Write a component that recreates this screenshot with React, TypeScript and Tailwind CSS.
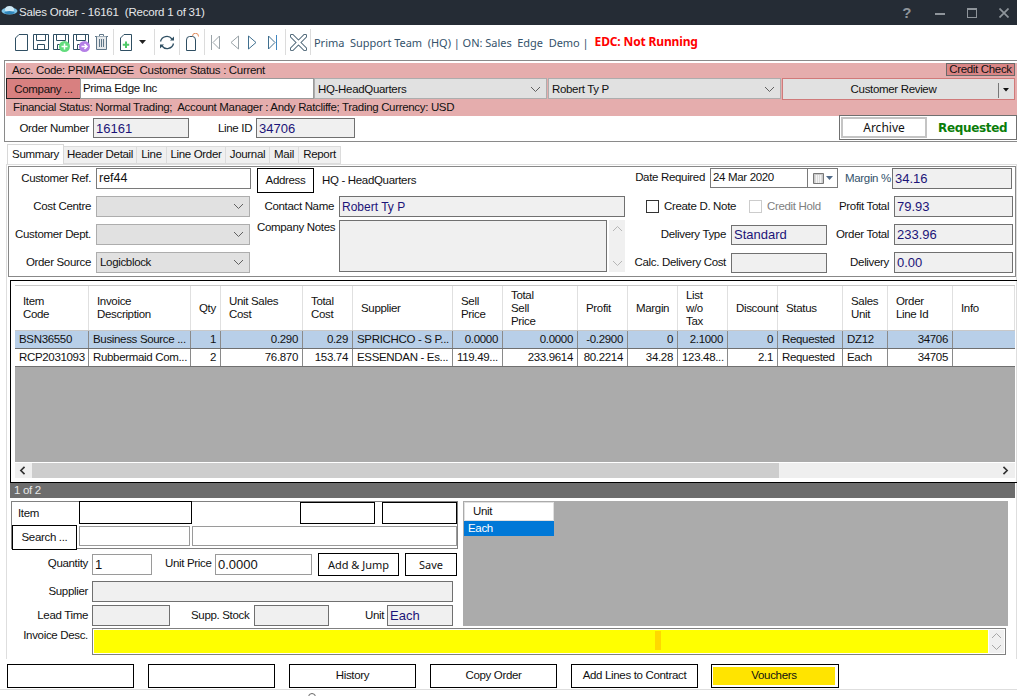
import React from "react";

const Chevron = ({ className = "", strong = false }: { className?: string; strong?: boolean }) => (
  <svg width="11" height="7" viewBox="0 0 11 7" className={className}>
    <path d="M1 1l4.500 4.500L10 1" fill="none" stroke={strong ? "#333" : "#606060"} strokeWidth={strong ? 2 : 1} />
  </svg>
);

const Ink = "#2f4f63";

const DocIcon = () => (
  <svg width="13" height="17" viewBox="0 0 13 17" className="ml-0">
    <path d="M4 .5H12.5V16.5H.5V4Z" fill="#fff" stroke={Ink} />
  </svg>
);
const SaveShape = () => (
  <>
    <path d="M.5.5H15.5V15.5H.5Z" fill="#fff" stroke={Ink} />
    <path d="M3.5.5V6.5H12.5V.5M4.5 15.5V10.5H11.5V15.5" fill="none" stroke={Ink} />
  </>
);

const Title = () => (
  <div className="flex h-[25px] items-center bg-[#252c35] text-[#e6e8ea]">
    <svg width="17" height="12" viewBox="0 0 17 12" className="ml-[1px] -mt-[4px]">
      <ellipse cx="8.5" cy="6" rx="8" ry="3.5" fill="#7cc4e8" />
      <ellipse cx="8.5" cy="4.5" rx="4.5" ry="3.5" fill="#cfeaf7" />
      <ellipse cx="8.5" cy="7.5" rx="5" ry="1.5" fill="#2f86bd" />
    </svg>
    <span className="ml-[1px] whitespace-pre text-[11.5px] tracking-[-0.2px]">Sales Order - 16161  (Record 1 of 31)</span>
    <div className="ml-auto flex items-center">
      <span className="text-[15px] font-bold text-[#8f959b]">?</span>
      <div className="ml-[24px] mt-[2px] h-[2px] w-[10px] bg-[#8f959b]" />
      <div className="ml-[22px] h-[10px] w-[10px] border border-t-2 border-[#8f959b]" />
      <svg width="10" height="10" viewBox="0 0 10 10" className="ml-[22px] mr-[8px]">
        <path d="M.5.5l9 9M9.5.5l-9 9" stroke="#8f959b" strokeWidth="1.7" />
      </svg>
    </div>
  </div>
);

const Sep = ({ className }: { className: string }) => <div className={`h-[26px] w-px bg-[#dcdcdc] ${className}`} />;

const Toolbar = () => (
  <div className="flex h-[34px] items-center pl-[15px]">
    <DocIcon />
    <svg width="16" height="16" viewBox="0 0 16 16" className="ml-[5px]"><SaveShape /></svg>
    <svg width="17" height="18" viewBox="0 0 17 18" className="ml-[4px] mt-[2px]">
      <SaveShape />
      <circle cx="11.5" cy="12.5" r="5.5" fill="#63dc7e" />
      <path d="M11.5 9.5v6M8.5 12.5h6" stroke="#fff" strokeWidth="1.5" />
    </svg>
    <svg width="17" height="18" viewBox="0 0 17 18" className="ml-[3px] mt-[2px]">
      <SaveShape />
      <circle cx="11.5" cy="12.5" r="5.5" fill="#b57fe6" />
      <path d="M8.5 12.5h5M11.5 10l2.5 2.5-2.5 2.5" fill="none" stroke="#fff" strokeWidth="1.5" />
    </svg>
    <svg width="13" height="16" viewBox="0 0 13 16" className="ml-[5px]">
      <path d="M0 2.5H13M4.5 2.5V.5H8.500V2.5" fill="none" stroke="#5f7688" />
      <path d="M1.500 2.500V15.500H11.500V2.500" fill="#e6e9eb" stroke="#5f7688" />
      <path d="M4.500 5V13M6.500 5V13M8.500 5V13" stroke="#5f7688" />
    </svg>
    <Sep className="ml-[5px]" />
    <svg width="12" height="17" viewBox="0 0 12 17" className="ml-[6px]">
      <path d="M4 .5H11.500V16.500H.5V4Z" fill="#fff" stroke={Ink} />
      <path d="M6 7.500V14M2.800 10.700H9.200" stroke="#4fca68" strokeWidth="2" />
    </svg>
    <svg width="7" height="4" viewBox="0 0 7 4" className="ml-[7px]"><path d="M0 0H7L3.500 4Z" fill="#222" /></svg>
    <Sep className="ml-[8px]" />
    <svg width="16" height="15" viewBox="0 0 16 15" className="ml-[4px]">
      <path d="M1.500 6.500A6.500 6.500 0 0 1 13 4M14.500 8.500A6.500 6.500 0 0 1 3 11" fill="none" stroke={Ink} strokeWidth="1.300" />
      <path d="M15 1.500V5.500H11ZM1 13.500V9.500H5Z" fill={Ink} />
    </svg>
    <Sep className="ml-[4px]" />
    <svg width="13" height="18" viewBox="0 0 13 18" className="ml-[6px]">
      <path d="M.5 17.500V7Q.5 3.500 3.500 3.500H6.500Q9.500 3.500 9.500 7V17.500Z" fill="#fff" stroke={Ink} />
      <path d="M6.500 3A3 3 0 0 1 12.500 3.500" fill="none" stroke="#e08a5a" />
    </svg>
    <Sep className="ml-[5px]" />
    <svg width="9" height="15" viewBox="0 0 9 15" className="ml-[6px]">
      <path d="M.5 0V15" stroke="#9aa3a8" /><path d="M8.500 1V14L2 7.500Z" fill="none" stroke="#9aa3a8" />
    </svg>
    <svg width="9" height="15" viewBox="0 0 9 15" className="ml-[10px]">
      <path d="M8.500 1V14L1 7.500Z" fill="none" stroke="#9aa3a8" />
    </svg>
    <svg width="9" height="15" viewBox="0 0 9 15" className="ml-[9px]">
      <path d="M.5 1V14L8 7.500Z" fill="none" stroke="#3f6f8f" />
    </svg>
    <svg width="9" height="15" viewBox="0 0 9 15" className="ml-[11px]">
      <path d="M.5 1V14L7 7.500Z" fill="none" stroke="#3f6f8f" /><path d="M8.500 0V15" stroke="#3f86c0" />
    </svg>
    <Sep className="ml-[8px]" />
    <svg width="17" height="17" viewBox="0 0 17 17" className="ml-[4px]">
      <path d="M2 2L15 15M15 2L2 15" stroke="#3f5a6c" strokeWidth="4.500" strokeLinecap="round" />
      <path d="M2 2L15 15M15 2L2 15" stroke="#fff" strokeWidth="2.500" strokeLinecap="round" />
    </svg>
    <Sep className="ml-[3px]" />
    <span className="ml-[3px] whitespace-pre font-['Noto_Sans',sans-serif] text-[11px] tracking-[-0.03px] text-[#34526b]">Prima  Support Team  (HQ) | ON: Sales  Edge  Demo |</span>
    <span className="ml-[6px] font-['Noto_Sans',sans-serif] text-[12px] font-bold tracking-[-0.15px] text-[#ff0000]">EDC: Not Running</span>
  </div>
);

const ro = "flex items-center border border-[#707070] bg-[#f0f0f0] pl-[2px] tracking-normal text-[#1c1478]";

const Select = ({ className, value }: { className: string; value?: string }) => (
  <div className={`flex items-center justify-between border border-[#adadad] bg-[#e1e1e1] pl-[3px] pr-[5px] ${className}`}>
    <span>{value}</span>
    <Chevron />
  </div>
);

const Header = () => (
  <div className="ml-[4px] mt-px border-l border-b border-t border-[#8a8a8a] pl-px pt-[2px]">
    <div className="bg-[#e5adad]">
      <div className="flex h-[15px] items-center whitespace-pre pl-[6px]">
        <span>Acc. Code: PRIMAEDGE  Customer Status : Current</span>
        <div className="ml-auto mr-[2px] flex h-[13px] w-[69px] items-center justify-center self-start border border-[#6a6a6a] bg-[#d98585]">Credit Check</div>
      </div>
      <div className="flex h-[21px]">
        <div className="flex w-[75px] items-center justify-center border border-[#222] bg-[#d88080] pt-[2px]">Company ...</div>
        <div className="flex w-[234px] items-center border border-[#9a9a9a] bg-white pl-[2px] -ml-px">Prima Edge Inc</div>
        <Select className="w-[233px] pt-[2px]" value="HQ-HeadQuarters" />
        <Select className="ml-px w-[233px] pt-[2px]" value="Robert Ty P" />
        <div className="ml-px flex h-[22px] w-[233px] items-center border border-[#d07a7a] bg-[#e1e1e1] pt-[2px]">
          <span className="flex-1 pl-[6px] text-center">Customer Review</span>
          <div className="h-[15px] w-px bg-[#777]" />
          <svg width="15" height="4" viewBox="0 0 15 4"><path d="M4 0H10L7 3.500Z" fill="#111" /></svg>
        </div>
      </div>
      <div className="flex h-[17px] items-center whitespace-pre pl-[7px]">Financial Status: Normal Trading;  Account Manager : Andy Ratcliffe; Trading Currency: USD</div>
    </div>
    <div className="flex h-[25px] items-start">
      <span className="mt-[7px] w-[83px] text-right">Order Number</span>
      <div className={`${ro} ml-[4px] mt-[2px] h-[20px] w-[96px] text-[13px]`}>16161</div>
      <span className="ml-[29px] mt-[7px] w-[34px] whitespace-nowrap">Line ID</span>
      <div className={`${ro} ml-[4px] mt-[2px] h-[20px] w-[99px] text-[13px]`}>34706</div>
      <div className="-mt-px ml-auto flex h-[25px] w-[178px] items-center border border-[#707070] pl-px">
        <div className="flex h-[21px] w-[86px] items-center justify-center border-[2px] border-[#c4c4c4] bg-white font-['Noto_Sans',sans-serif] text-[12px] tracking-normal">Archive</div>
        <span className="ml-[11px] font-['DejaVu_Sans',sans-serif] text-[12px] font-bold text-[#0a7d0a]">Requested</span>
      </div>
    </div>
  </div>
);

const tabs: [string, string][] = [
  ["Header Detail", "w-[73px]"],
  ["Line", "w-[30px]"],
  ["Line Order", "w-[59px]"],
  ["Journal", "w-[44px]"],
  ["Mail", "w-[29px]"],
  ["Report", "w-[42px]"],
];

const Tabs = () => (
  <div className="ml-[7px] mt-[2px] flex h-[20px] items-end">
    <div className="z-10 flex h-[20px] w-[57px] items-center justify-center border border-b-0 border-[#d8d8d8] bg-white">Summary</div>
    {tabs.map(([t, w]) => (
      <div key={t} className={`flex h-[18px] items-center justify-center border border-l-0 border-[#dcdcdc] bg-[#f0f0f0] ${w}`}>{t}</div>
    ))}
  </div>
);

const rowGap = "h-[21px]";

const Label = ({ className, children }: { className: string; children: React.ReactNode }) => (
  <span className={`whitespace-nowrap text-right ${className}`}>{children}</span>
);

const Summary = () => (
  <div className="ml-px flex h-[111px] w-[1008px] border border-[#888]">
    <div className="flex w-[243px] flex-col gap-[7px] pt-px">
      <div className={`flex items-center ${rowGap}`}>
        <Label className="w-[82px]">Customer Ref.</Label>
        <div className="ml-[5px] flex h-[21px] w-[155px] items-center border border-[#7a7a7a] bg-white pl-[2px] text-[12.5px] tracking-normal">ref44</div>
      </div>
      <div className={`flex items-center ${rowGap}`}>
        <Label className="w-[82px]">Cost Centre</Label>
        <Select className="ml-[5px] h-[21px] w-[154px]" />
      </div>
      <div className={`flex items-center ${rowGap}`}>
        <Label className="w-[82px]">Customer Dept.</Label>
        <Select className="ml-[5px] h-[21px] w-[154px]" />
      </div>
      <div className={`flex items-center ${rowGap}`}>
        <Label className="w-[82px]">Order Source</Label>
        <Select className="ml-[5px] h-[21px] w-[154px]" value="Logicblock" />
      </div>
    </div>
    <div className="ml-[5px] w-[369px] pt-px">
      <div className="flex h-[25px] items-center">
        <div className="flex h-[25px] w-[57px] items-center justify-center border border-black bg-white">Address</div>
        <span className="ml-[8px]">HQ - HeadQuarters</span>
      </div>
      <div className="mt-[3px] flex h-[21px] items-center">
        <Label className="w-[77px]">Contact Name</Label>
        <div className={`${ro} ml-[5px] h-[21px] w-[286px] text-[12px]`}>Robert Ty P</div>
      </div>
      <div className="mt-[3px] flex h-[52px]">
        <Label className="mt-[2px] w-[77px]">Company Notes</Label>
        <div className="ml-[5px] h-[52px] w-[268px] border border-[#707070] bg-[#f0f0f0]" />
        <div className="ml-[2px] flex h-[52px] w-[16px] flex-col items-center justify-between bg-[#f0f0f0] py-[5px]">
          <Chevron className="rotate-180 opacity-40" />
          <Chevron className="opacity-40" />
        </div>
      </div>
    </div>
    <div className="ml-[6px] flex w-[382px] flex-col gap-[7px] pt-px">
      <div className={`flex items-center ${rowGap}`}>
        <Label className="-mt-[2px] w-[73px]">Date Required</Label>
        <div className="-mt-px ml-[5px] flex h-[20px] w-[128px] items-center border border-[#7a7a7a] bg-white pl-[2px]">
          <span className="flex-1">24 Mar 2020</span>
          <div className="flex h-full w-[30px] items-center justify-center gap-[2px] border-l border-[#7a7a7a]">
            <svg width="11" height="11" viewBox="0 0 11 11"><path d="M.5.5H10.500V10.500H.5Z" fill="#c8c8c8" stroke="#777" /><path d="M2 3H9M2 5H9M2 7H9M2 9H9M3.500 2V10M5.500 2V10M7.500 2V10" stroke="#fff" strokeWidth=".7" /></svg>
            <svg width="7" height="4" viewBox="0 0 7 4"><path d="M0 0H7L3.500 4Z" fill="#506a88" /></svg>
          </div>
        </div>
        <Label className="ml-[7px] w-[43px] text-[#34526b]">Margin %</Label>
        <div className={`${ro} ml-[4px] h-[21px] w-[120px] text-[13px]`}>34.16</div>
      </div>
      <div className={`flex items-center ${rowGap}`}>
        <div className="ml-[14px] h-[13px] w-[13px] border border-[#333] bg-white" />
        <span className="ml-[5px] w-[85px]">Create D. Note</span>
        <div className="h-[13px] w-[13px] border border-[#ccc] bg-white" />
        <span className="ml-[5px] w-[72px] text-[#808080]">Credit Hold</span>
        <Label className="w-[50px]">Profit Total</Label>
        <div className={`${ro} ml-[5px] h-[21px] w-[119px] text-[13px]`}>79.93</div>
      </div>
      <div className={`flex items-center ${rowGap}`}>
        <Label className="w-[94px]">Delivery Type</Label>
        <div className={`${ro} ml-[5px] h-[20px] w-[96px] text-[13px]`}>Standard</div>
        <Label className="ml-[9px] w-[53px]">Order Total</Label>
        <div className={`${ro} ml-[5px] h-[21px] w-[119px] text-[13px]`}>233.96</div>
      </div>
      <div className={`flex items-center ${rowGap}`}>
        <Label className="w-[94px]">Calc. Delivery Cost</Label>
        <div className={`${ro} ml-[5px] h-[20px] w-[96px]`} />
        <Label className="ml-[9px] w-[53px]">Delivery</Label>
        <div className={`${ro} ml-[5px] h-[21px] w-[119px] text-[13px]`}>0.00</div>
      </div>
    </div>
  </div>
);

const cols = "grid grid-cols-[74px_102px_30px_82px_50px_100px_50px_75px_50px_50px_50px_50px_65px_45px_65px_1fr]";

const headers = [
  ["Item", "Code"],
  ["Invoice", "Description"],
  ["Qty"],
  ["Unit Sales", "Cost"],
  ["Total", "Cost"],
  ["Supplier"],
  ["Sell", "Price"],
  ["Total", "Sell", "Price"],
  ["Profit"],
  ["Margin"],
  ["List", "w/o", "Tax"],
  ["Discount"],
  ["Status"],
  ["Sales", "Unit"],
  ["Order", "Line Id"],
  ["Info"],
];

const rows: [string, boolean][][] = [
  [["BSN36550", false], ["Business Source ...", false], ["1", true], ["0.290", true], ["0.29", true], ["SPRICHCO - S P...", false], ["0.0000", true], ["0.0000", true], ["-0.2900", true], ["0", true], ["2.1000", true], ["0", true], ["Requested", false], ["DZ12", false], ["34706", true], ["", false]],
  [["RCP2031093", false], ["Rubbermaid Com...", false], ["2", true], ["76.870", true], ["153.74", true], ["ESSENDAN - Es...", false], ["119.49...", false], ["233.9614", true], ["80.2214", true], ["34.28", true], ["123.48...", false], ["2.1", true], ["Requested", false], ["Each", false], ["34705", true], ["", false]],
];

const DataGrid = () => (
  <div className="ml-[3px] mt-[3px] w-[1007px] border-t border-l border-b border-black pl-[4px] pr-[2px] pt-[4px]">
    <div className={`${cols} h-[46px] border-t border-b border-[#c8c8c8] bg-white`}>
      {headers.map((h) => (
        <div key={h.join()} className="flex flex-col justify-center border-r border-[#e0e0e0] pl-[8px] leading-[13px]">
          {h.map((l) => <span key={l}>{l}</span>)}
        </div>
      ))}
    </div>
    {rows.map((r, i) => (
      <div key={i} className={`${cols} h-[18px] border-b border-[#707070] ${i === 0 ? "bg-[#b8cfe8]" : "bg-white"}`}>
        {r.map(([t, right], j) => (
          <div key={j} className={`flex items-center overflow-hidden whitespace-nowrap border-r border-[#8a8a8a] px-[4px] pt-px last:border-r-0 ${right ? "justify-end" : ""}`}>{t}</div>
        ))}
      </div>
    ))}
    <div className="h-[95px] bg-[#ababab]" />
    <div className="mt-px flex h-[15px] items-center bg-[#efefef]">
      <Chevron strong className="ml-[3px] h-[9px] w-[9px] rotate-90" />
      <div className="ml-[5px] h-full w-[747px] bg-[#cdcdcd]" />
      <Chevron strong className="ml-[222px] h-[9px] w-[9px] -rotate-90" />
    </div>
    <div className="h-[4px]" />
  </div>
);

const Band = () => (
  <div className="ml-[3px] flex h-[15px] w-[1005px] items-center bg-[#6d6d6d] pl-[4px] pt-px text-[#e8e8e8]">1 of 2</div>
);

const blackBox = "border border-black bg-white";
const greyBox = "border border-[#9a9a9a] bg-white";

const Lower = () => (
  <div className="ml-[4px] mt-[3px] flex">
    <div className="w-[447px]">
      <div className="h-[48px] w-[447px] border border-[#808080]">
        <div className="flex h-[23px]">
          <span className="ml-[6px] mt-[6px] w-[61px]">Item</span>
          <div className={`-mt-px h-[23px] w-[113px] ${blackBox}`} />
          <div className={`ml-[108px] h-[22px] w-[75px] ${blackBox}`} />
          <div className={`ml-[7px] h-[22px] w-[75px] ${blackBox}`} />
        </div>
        <div className="flex">
          <div className={`flex h-[25px] w-[65px] items-center justify-center ${blackBox}`}>Search ...</div>
          <div className={`ml-[2px] mt-px h-[20px] w-[111px] ${greyBox}`} />
          <div className={`ml-[2px] mt-px h-[20px] w-[265px] ${greyBox}`} />
        </div>
      </div>
      <div className="mt-[3px] flex h-[24px] items-center">
        <Label className="w-[77px]">Quantity</Label>
        <div className={`ml-[4px] flex h-[21px] w-[60px] items-center pl-[2px] text-[13px] tracking-normal ${greyBox}`}>1</div>
        <span className="ml-[13px] w-[46px] whitespace-nowrap">Unit Price</span>
        <div className={`ml-[4px] flex h-[21px] w-[97px] items-center pl-[2px] text-[13px] tracking-normal ${greyBox}`}>0.0000</div>
        <div className={`ml-[6px] flex h-[23px] w-[81px] items-center justify-center font-['Noto_Sans',sans-serif] text-[11px] tracking-normal ${blackBox}`}>Add &amp; Jump</div>
        <div className={`ml-[6px] flex h-[23px] w-[52px] items-center justify-center font-['Noto_Sans',sans-serif] text-[11px] tracking-normal ${blackBox}`}>Save</div>
      </div>
      <div className="mt-[5px] flex h-[21px] items-center">
        <Label className="w-[77px]">Supplier</Label>
        <div className={`${ro} ml-[4px] h-[21px] w-[361px]`} />
      </div>
      <div className="mt-[3px] flex h-[21px] items-center">
        <Label className="w-[77px]">Lead Time</Label>
        <div className={`${ro} ml-[4px] h-[21px] w-[78px]`} />
        <span className="ml-[21px] w-[58px] whitespace-nowrap">Supp. Stock</span>
        <div className={`${ro} ml-[5px] h-[21px] w-[75px]`} />
        <span className="ml-[36px] w-[17px]">Unit</span>
        <div className={`${ro} ml-[5px] h-[21px] w-[66px] text-[13px]`}>Each</div>
      </div>
    </div>
    <div className="ml-[5px] h-[125px] w-[545px] bg-[#ababab] pl-px pt-px">
      <div className="flex h-[19px] w-[90px] items-center border border-[#e0e0e0] bg-white pl-[8px]">Unit</div>
      <div className="flex h-[15px] w-[90px] items-center bg-[#0078d7] pl-[4px] pt-px text-white">Each</div>
    </div>
  </div>
);

const InvoiceDesc = () => (
  <div className="ml-[4px] mt-[2px] flex pb-[4px]">
    <Label className="mt-[2px] w-[77px]">Invoice Desc.</Label>
    <div className="ml-[4px] flex h-[27px] w-[914px] border border-[#808080] bg-white p-px">
      <div className="flex h-full w-[894px] bg-[#ffff00] pl-[561px] pt-px">
        <div className="h-[19px] w-[6px] bg-[#ffd800]" />
      </div>
      <div className="ml-px flex flex-1 flex-col items-center justify-around bg-[#f0f0f0]">
        <Chevron className="rotate-180 opacity-50" />
        <Chevron className="opacity-50" />
      </div>
    </div>
  </div>
);

const Footer = () => (
  <div className="mt-[5px] flex pl-[7px]">
    <div className={`h-[24px] w-[127px] ${blackBox}`} />
    <div className={`ml-[14px] h-[24px] w-[127px] ${blackBox}`} />
    <div className={`ml-[14px] flex h-[24px] w-[127px] items-center justify-center ${blackBox}`}>History</div>
    <div className={`ml-[14px] flex h-[24px] w-[127px] items-center justify-center ${blackBox}`}>Copy Order</div>
    <div className={`ml-[14px] flex h-[24px] w-[127px] items-center justify-center ${blackBox}`}>Add Lines to Contract</div>
    <div className={`ml-[13px] h-[24px] w-[128px] pb-[2px] pl-[1px] pr-[3px] pt-[2px] ${blackBox}`}>
      <div className="flex h-full items-center justify-center bg-[#ffe400]">Vouchers</div>
    </div>
  </div>
);

export default function App() {
  return (
    <div className="h-[696px] w-[1017px] overflow-hidden bg-white font-['Liberation_Sans',Arial,sans-serif] text-[11.5px] leading-none tracking-[-0.33px] text-[#111]">
      <Title />
      <Toolbar />
      <Header />
      <Tabs />
      <div className="ml-[6px] w-[1011px] border-l border-r border-t border-[#dedede] pt-px">
        <Summary />
        <DataGrid />
        <Band />
        <Lower />
        <InvoiceDesc />
      </div>
      <Footer />
      <div className="mt-px flex h-[8px] justify-center border-t border-[#dedede]">
        <div className="ml-[-394px] mt-[3px] h-[8px] w-[8px] rounded-full border border-[#666]" />
      </div>
    </div>
  );
}
